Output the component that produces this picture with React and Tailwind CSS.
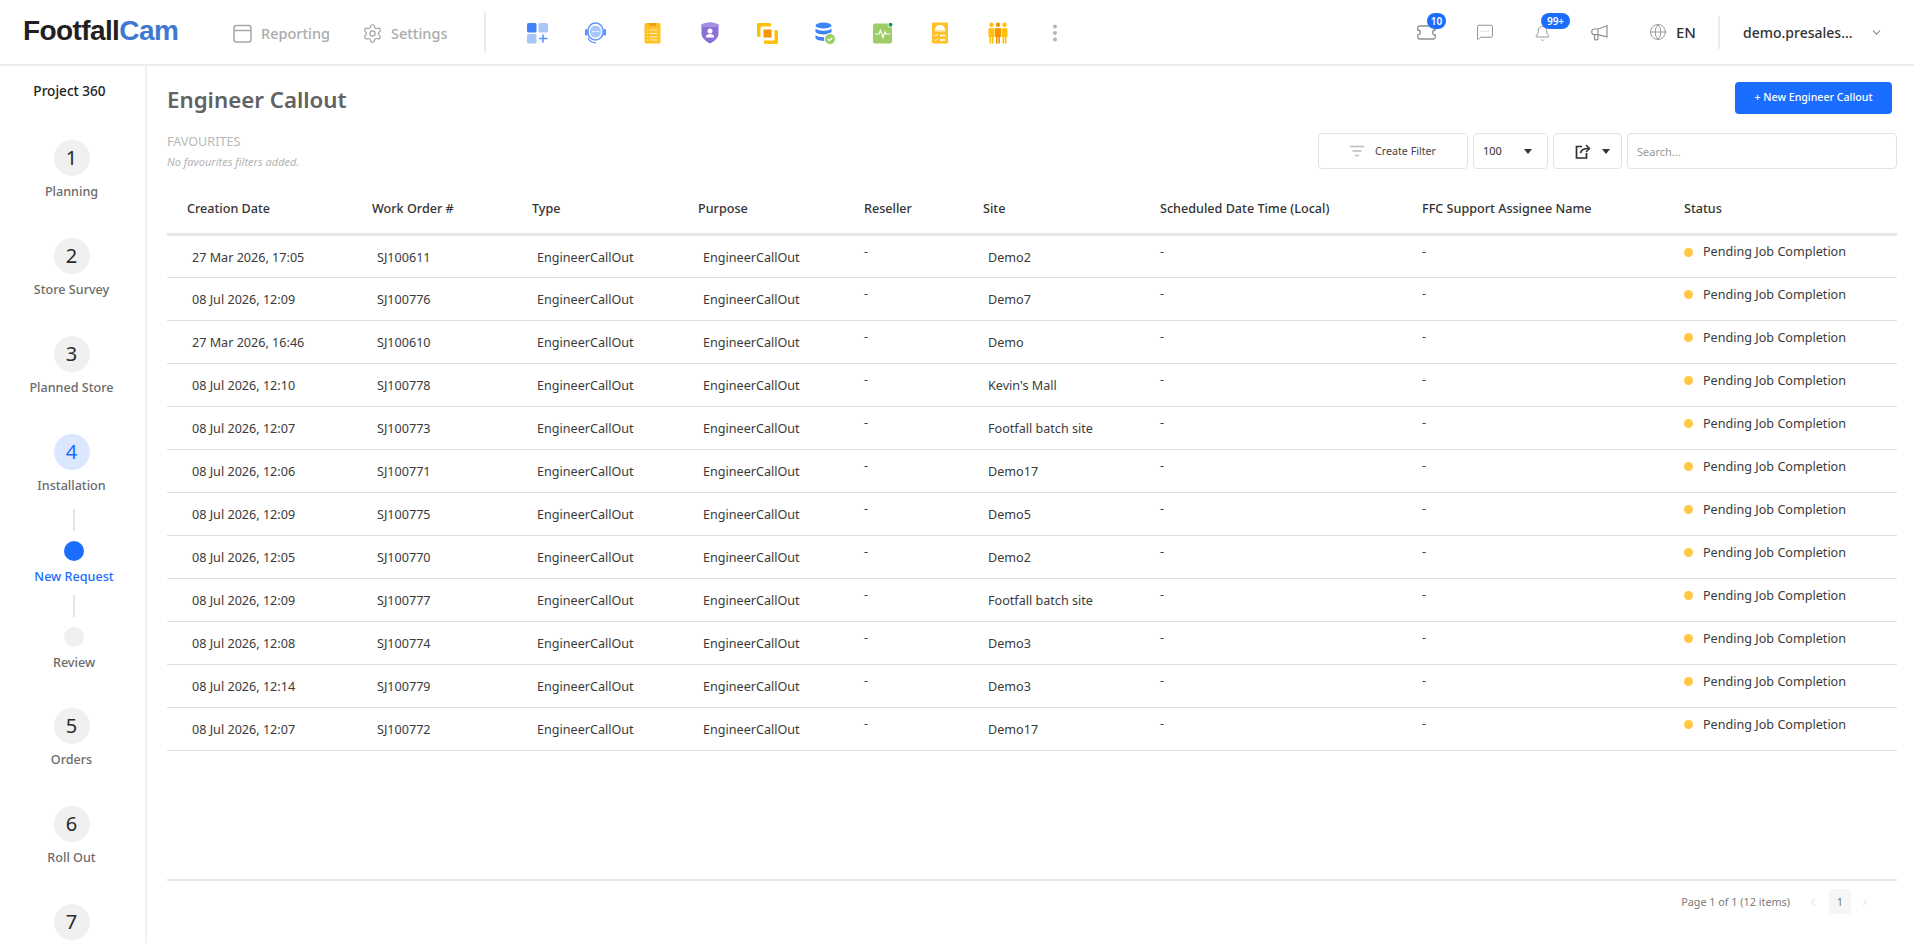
import React from "react";
import { Settings, MessageSquareMore, Bell, Globe, ChevronDown, ChevronLeft, ChevronRight } from "lucide-react";

const rows = [
  ["27 Mar 2026, 17:05", "SJ100611", "Demo2"],
  ["08 Jul 2026, 12:09", "SJ100776", "Demo7"],
  ["27 Mar 2026, 16:46", "SJ100610", "Demo"],
  ["08 Jul 2026, 12:10", "SJ100778", "Kevin's Mall"],
  ["08 Jul 2026, 12:07", "SJ100773", "Footfall batch site"],
  ["08 Jul 2026, 12:06", "SJ100771", "Demo17"],
  ["08 Jul 2026, 12:09", "SJ100775", "Demo5"],
  ["08 Jul 2026, 12:05", "SJ100770", "Demo2"],
  ["08 Jul 2026, 12:09", "SJ100777", "Footfall batch site"],
  ["08 Jul 2026, 12:08", "SJ100774", "Demo3"],
  ["08 Jul 2026, 12:14", "SJ100779", "Demo3"],
  ["08 Jul 2026, 12:07", "SJ100772", "Demo17"],
];

const AppIcons = [
  <svg key="1" width="21" height="22" viewBox="0 0 21 22">
    <rect x="0" y="1" width="9.5" height="9.5" rx="1.5" fill="#3f83f8" />
    <rect x="11.5" y="1" width="9.5" height="9.5" rx="1.5" fill="#a9c6fb" />
    <rect x="0" y="12" width="9.5" height="9.5" rx="1.5" fill="#a9c6fb" />
    <path d="M16 12.5v8M12 16.5h8.5" stroke="#5b94f9" strokeWidth="1.6" />
  </svg>,
  <svg key="2" width="21" height="22" viewBox="0 0 21 22">
    <rect x="3" y="1" width="15" height="17" rx="7.5" fill="#fff" stroke="#5b94f9" strokeWidth="1.5" />
    <rect x="5" y="3.500" width="11" height="12" rx="5.5" fill="#a9c6fb" />
    <rect x="0" y="7" width="2.6" height="6.500" rx="1.2" fill="#5b94f9" />
    <rect x="18.4" y="7" width="2.6" height="6.500" rx="1.2" fill="#5b94f9" />
    <path d="M3 16c1.500 3 4 4.800 8 4.800" stroke="#5b94f9" strokeWidth="1.300" fill="none" />
    <circle cx="8" cy="9.500" r=".8" fill="#fff" /><circle cx="10.500" cy="9.500" r=".8" fill="#fff" /><circle cx="13" cy="9.500" r=".8" fill="#fff" />
  </svg>,
  <svg key="3" width="17" height="22" viewBox="0 0 17 22">
    <rect x="0.500" y="1" width="16" height="20.500" rx="1.500" fill="#ffc125" />
    <rect x="5" y="1" width="7" height="3" fill="#f59e0b" />
    <path d="M5.500 8h8M5.500 11.500h8M5.500 15h8M5.500 18h8" stroke="#fff0c2" strokeWidth="1.200" />
    <path d="M3 8h1M3 11.500h1M3 15h1M3 18h1" stroke="#fff0c2" strokeWidth="1.200" />
  </svg>,
  <svg key="4" width="18" height="22" viewBox="0 0 18 22">
    <path d="M9 .5c3 0 6 .8 8.500 2v8.500c0 4.500-3.500 8-8.500 10.500C4 19 .5 15.500.5 11V2.500C3 1.300 6 .5 9 .5z" fill="#8b6fd4" />
    <path d="M9 .5c3 0 6 .8 8.500 2v2.500H.5V2.500C3 1.300 6 .5 9 .5z" fill="#a48fe0" />
    <circle cx="9" cy="9" r="2.500" fill="#fff" />
    <path d="M4.800 15.500c0-2.500 2-3.500 4.200-3.500s4.200 1 4.200 3.500z" fill="#fff" />
  </svg>,
  <svg key="5" width="21" height="22" viewBox="0 0 21 22">
    <rect x="0" y="1" width="14" height="14" rx="1.500" fill="#ffc107" />
    <rect x="7" y="8" width="14" height="14" rx="1.500" fill="#ffc107" />
    <rect x="3.500" y="4.500" width="14" height="14" rx="1" fill="#fff" />
    <rect x="6.500" y="7.500" width="8" height="8" fill="#f59300" />
  </svg>,
  <svg key="6" width="21" height="23" viewBox="0 0 21 23">
    <ellipse cx="8.500" cy="3.500" rx="8" ry="3" fill="#3f83f8" />
    <path d="M.5 6.500c1.500 1.500 4.500 2.200 8 2.200s6.500-.7 8-2.200v3.500c-1 1.500-4.500 2.500-8 2.500s-7-1-8-2.500z" fill="#3f83f8" />
    <path d="M.5 13c1.500 1.500 4.500 2.200 8 2.200l2 .3-.5 3.500c-4 0-8.500-1-9.500-2.500z" fill="#3f83f8" />
    <circle cx="15" cy="17" r="5.500" fill="#9ccc65" stroke="#fff" strokeWidth="1" />
    <path d="M12.700 17l1.700 1.700 3-3" stroke="#fff" strokeWidth="1.300" fill="none" />
  </svg>,
  <svg key="7" width="20" height="22" viewBox="0 0 20 22">
    <rect x="0" y="1.500" width="19" height="20" rx="2" fill="#9ccc65" />
    <path d="M2 12h4l1.500-3.500 2.500 7 2-5.500 1 2h4.500" stroke="#fff" strokeWidth="1.200" fill="none" />
    <circle cx="17.500" cy="2.800" r="2.800" fill="#fff" />
    <circle cx="17.500" cy="2.800" r="2" fill="#0f9d58" />
  </svg>,
  <svg key="8" width="16" height="22" viewBox="0 0 16 22">
    <rect x="0" y="0.500" width="16" height="21" rx="1" fill="#ffc125" />
    <path d="M3 8c0-3 2-5 5-5s5 2 5 5z" fill="#fff" />
    <rect x="2.500" y="8.500" width="11" height="1" fill="#fff" />
    <path d="M2.500 13l1.300 1.200 2-2M2.500 17.500l1.300 1.200 2-2" stroke="#fff" strokeWidth="1" fill="none" />
    <path d="M8 13.500h5.500M8 18h5.500" stroke="#fff" strokeWidth="1.300" />
  </svg>,
  <svg key="9" width="20" height="22" viewBox="0 0 20 22">
    <g fill="#ffc107">
      <circle cx="3.500" cy="2.700" r="2.200" /><path d="M.5 6.200h6V15H5.500v6.500H1.500V15H.5z" />
      <circle cx="16.500" cy="2.700" r="2.200" /><path d="M13.500 6.200h6V15h-1v6.500h-4V15h-1z" />
    </g>
    <g fill="#f59300">
      <circle cx="10" cy="2.700" r="2.200" /><path d="M7 6.200h6V15h-1v6.500H8V15H7z" />
    </g>
    <path d="M3.500 15v6.500M10 15v6.500M16.500 15v6.500" stroke="#fff" strokeWidth=".7" />
  </svg>,
  <svg key="10" width="6" height="18" viewBox="0 0 6 18">
    <circle cx="3" cy="2.500" r="2" fill="#b5b5b5" /><circle cx="3" cy="9" r="2" fill="#b5b5b5" /><circle cx="3" cy="15.500" r="2" fill="#b5b5b5" />
  </svg>,
];

function Step({ n, label, active, mb = "mb-[37px]" }) {
  return (
    <div className={`flex flex-col items-center pr-[2px] shrink-0 ${mb}`}>
      <div className={`w-9 h-9 shrink-0 rounded-full flex items-center justify-center text-[20px] leading-none ${active ? "bg-[#dbe7ff] text-[#1a6dff]" : "bg-[#f0f0f0] text-[#2b2b2b]"}`}>{n}</div>
      {label && <div className="mt-[6px] h-[20px] leading-[20px] text-[12.6px] font-medium text-[#6b6b6b] whitespace-nowrap">{label}</div>}
    </div>
  );
}

function SubStep({ label, active }) {
  return (
    <div className="flex flex-col items-center">
      <div className="w-[2px] h-[22px] bg-[#e6e6e6]" />
      <div className={`w-5 h-5 rounded-full mt-[10px] ${active ? "bg-[#1a6dff]" : "bg-[#f0f0f0]"}`} />
      <div className={`mt-[6px] h-[20px] leading-[20px] text-[12.6px] font-medium whitespace-nowrap ${active ? "text-[#1a6dff]" : "text-[#6b6b6b]"}`}>{label}</div>
    </div>
  );
}

const Th = ({ w, children }) => (
  <th className={`${w} pl-5 text-left font-medium text-[12.6px] text-[#333] align-middle whitespace-nowrap`}>{children}</th>
);
const TdC = ({ children }) => (
  <td className="pl-[25px] pt-[4px] align-middle text-[12.6px] text-[#3a3a3a] whitespace-nowrap">{children}</td>
);
const TdD = () => (
  <td className="pl-5 pb-[8px] align-middle text-[12.6px] text-[#3a3a3a]">-</td>
);

export default function App() {
  return (
    <div className="h-[943px] overflow-hidden flex flex-col bg-white font-['Noto_Sans',sans-serif] text-[#333]">
      <header className="h-[66px] shrink-0 border-b-2 border-[#ececec] flex items-center">
        <div className="w-[233px] pl-[23px] pb-[3px] text-[28px] leading-none font-['Liberation_Sans',sans-serif] font-bold tracking-[-0.6px] text-[#231f20]">
          Footfall<span className="text-[#3f78d1]">Cam</span>
        </div>
        <div className="flex items-center pt-[3px]">
          <svg width="19" height="19" viewBox="0 0 19 19" className="mr-[9px]" fill="none" stroke="#a8a8a8" strokeWidth="1.500">
            <rect x="1" y="1.500" width="17" height="16.500" rx="2.500" /><path d="M1 6.500h17" />
          </svg>
          <span className="text-[14.500px] font-medium text-[#ababab] w-[101px]">Reporting</span>
          <Settings size={21} color="#a0a0a0" strokeWidth={1.300} className="mr-[8px]" />
          <span className="text-[14.500px] font-medium text-[#ababab] w-[60px]">Settings</span>
        </div>
        <div className="w-[2px] h-[41px] bg-[#ececec] ml-[33px] mr-[23px]" />
        <div className="flex items-center pt-[2px]">
          {AppIcons.map((ic, i) => (
            <div key={i} className="w-[57.500px] flex items-center justify-center">{ic}</div>
          ))}
        </div>
        <div className="flex-1" />
        <div className="relative w-[19px] h-[18px] mr-[40px]">
          <svg width="19" height="15" viewBox="0 0 19 15" className="absolute top-[2px] left-0" fill="none" stroke="#8f8f8f" strokeWidth="1.300">
            <path d="M2.500 1h14c1 0 1.700.7 1.700 1.700v2.300a2.500 2.500 0 0 0 0 5v2.300c0 1-.7 1.700-1.700 1.700h-14c-1 0-1.700-.7-1.700-1.700V10a2.500 2.500 0 0 0 0-5V2.700C.8 1.700 1.500 1 2.500 1z" />
          </svg>
          <span className="absolute -top-[10px] left-[10px] w-[19px] h-[16px] rounded-full bg-[#1a6dff] text-white text-[10px] leading-[16px] text-center font-semibold">10</span>
        </div>
        <MessageSquareMore size={18} color="#8f8f8f" strokeWidth={1.300} className="mr-[40px]" />
        <div className="relative w-[16px] h-[18px] mr-[41px]">
          <Bell size={17} color="#8f8f8f" strokeWidth={1.300} className="absolute top-[2px] left-0" />
          <span className="absolute -top-[10px] left-[7px] w-[29px] h-[16px] rounded-full bg-[#1a6dff] text-white text-[10px] leading-[16px] text-center font-semibold">99+</span>
        </div>
        <svg width="17" height="17" viewBox="0 0 17 17" fill="none" stroke="#8f8f8f" strokeWidth="1.200" className="mr-[41px]">
          <path d="M16 1v12.500" /><path d="M16 1.800L7 5H3a2.200 2.200 0 0 0-2.200 2.200v1.200A2.200 2.200 0 0 0 3 10.600h4l9 2.200" />
          <path d="M7 5v5.600" /><path d="M3.500 10.800v3.700c0 .8.600 1.300 1.200 1.300h1.100c.7 0 1.200-.6 1.200-1.300v-3.500" />
        </svg>
        <Globe size={18} color="#8f8f8f" strokeWidth={1.200} className="mr-[9px]" />
        <span className="text-[15px] text-[#333] font-medium w-[20px]">EN</span>
        <div className="w-[2px] h-[33px] bg-[#ececec] ml-[22px] mr-[23px]" />
        <span className="text-[14px] font-medium text-[#333] w-[110px] whitespace-nowrap">demo.presales...</span>
        <ChevronDown size={13} color="#8a8a8a" className="ml-[17px] mr-[31px]" />
      </header>

      <div className="flex-1 flex min-h-0">
        <aside className="w-[147px] shrink-0 border-r-2 border-[#f0f0f0] flex flex-col pt-[15px] overflow-hidden">
          <div className="text-center text-[13.600px] font-medium text-[#222] pr-[6px] leading-[20px] mb-[39px]">Project 360</div>
          <Step n="1" label="Planning" mb="mb-[36px]" />
          <Step n="2" label="Store Survey" mb="mb-[36px]" />
          <Step n="3" label="Planned Store" mb="mb-[36px]" />
          <Step n="4" label="Installation" active mb="mb-[13px]" />
          <div className="flex flex-col items-center pl-[3px]">
            <SubStep label="New Request" active />
            <div className="h-[8px] shrink-0" />
            <SubStep label="Review" />
          </div>
          <div className="h-[35px] shrink-0" />
          <Step n="5" label="Orders" mb="mb-[36px]" />
          <Step n="6" label="Roll Out" mb="mb-[36px]" />
          <Step n="7" />
        </aside>

        <main className="flex-1 min-w-0 pl-[20px] pr-[17px] flex flex-col">
          <div className="flex justify-between items-start pt-[16px] h-[66px]">
            <h1 className="text-[22.300px] leading-[36px] font-semibold text-[#616264]">Engineer Callout</h1>
            <button className="w-[157px] h-[32px] mr-[5px] rounded-[4px] bg-[#1a6dff] text-white text-[10.600px] font-medium">+ New Engineer Callout</button>
          </div>
          <div className="flex justify-between items-start h-[54px]">
            <div>
              <div className="text-[12.600px] leading-[20px] text-[#b8b8b8]">FAVOURITES</div>
              <div className="text-[11px] leading-[16px] mt-[2px] italic text-[#b4b4b4]">No favourites filters added.</div>
            </div>
            <div className="flex gap-[5px] pt-[1px]">
              <button className="w-[150px] h-[36px] rounded-[4px] border border-[#e2e2e2] flex items-center justify-center gap-[11px] text-[10.700px] text-[#444]">
                <svg width="14" height="12" viewBox="0 0 14 12" stroke="#bdbdbd" strokeWidth="1.300"><path d="M0 1.500h14M2.500 6h9M5 10.500h4" /></svg>
                Create Filter
              </button>
              <button className="w-[75px] h-[36px] rounded-[4px] border border-[#e2e2e2] flex items-center justify-between pl-[9px] pr-[15px] text-[11px] text-[#333]">
                100
                <svg width="8" height="5" viewBox="0 0 8 5"><path d="M0 0h8L4 5z" fill="#333" /></svg>
              </button>
              <button className="w-[69px] h-[36px] rounded-[4px] border border-[#e2e2e2] flex items-center pl-[21px] gap-[11px]">
                <svg width="16" height="15" viewBox="0 0 16 15" fill="none" stroke="#2f2f2f" strokeWidth="1.700">
                  <path d="M7 2.500H1.500v11.500h10V9" /><path d="M5.500 9c.5-3 3-4.500 8-4.500" /><path d="M11 1l3.500 3.500L11 8" strokeWidth="1.500" />
                </svg>
                <svg width="8" height="5" viewBox="0 0 8 5"><path d="M0 0h8L4 5z" fill="#333" /></svg>
              </button>
              <input placeholder="Search..." className="w-[270px] h-[36px] rounded-[4px] border border-[#e2e2e2] px-[9px] text-[11px] outline-none placeholder:text-[#9a9a9a]" />
            </div>
          </div>

          <table className="table-fixed w-full border-collapse">
            <thead>
              <tr className="h-[48px] border-b-[3px] border-[#e6e6e6]">
                <Th w="w-[185px]">Creation Date</Th>
                <Th w="w-[160px]">Work Order #</Th>
                <Th w="w-[166px]">Type</Th>
                <Th w="w-[166px]">Purpose</Th>
                <Th w="w-[119px]">Reseller</Th>
                <Th w="w-[177px]">Site</Th>
                <Th w="w-[262px]">Scheduled Date Time (Local)</Th>
                <Th w="w-[262px]">FFC Support Assignee Name</Th>
                <Th>Status</Th>
              </tr>
            </thead>
            <tbody>
              {rows.map((r) => (
                <tr key={r[1]} className="h-[43px] border-b border-[#e0e0e0]">
                  <TdC>{r[0]}</TdC>
                  <TdC>{r[1]}</TdC>
                  <TdC>EngineerCallOut</TdC>
                  <TdC>EngineerCallOut</TdC>
                  <TdD />
                  <TdC>{r[2]}</TdC>
                  <TdD />
                  <TdD />
                  <td className="pl-5 pb-[7px] align-middle text-[12.600px] text-[#3a3a3a]">
                    <span className="flex items-center gap-[10px] whitespace-nowrap">
                      <span className="w-[9px] h-[9px] rounded-full bg-[#ffc845]" />
                      Pending Job Completion
                    </span>
                  </td>
                </tr>
              ))}
            </tbody>
          </table>

          <div className="flex-1" />
          <div className="h-[64px] shrink-0 border-t-2 border-[#e6e6e6] flex items-start justify-end pt-[8px]">
            <span className="text-[10.800px] leading-[25px] text-[#7a7a7a] mr-[17px]">Page 1 of 1 (12 items)</span>
            <ChevronLeft size={12} color="#d8d8d8" className="mt-[7px] mr-[10px]" />
            <span className="w-[22px] h-[25px] rounded-[3px] bg-[#f6f6f6] text-[11px] leading-[25px] text-center text-[#777]">1</span>
            <ChevronRight size={12} color="#d8d8d8" className="mt-[7px] ml-[8px] mr-[26px]" />
          </div>
        </main>
      </div>
    </div>
  );
}
